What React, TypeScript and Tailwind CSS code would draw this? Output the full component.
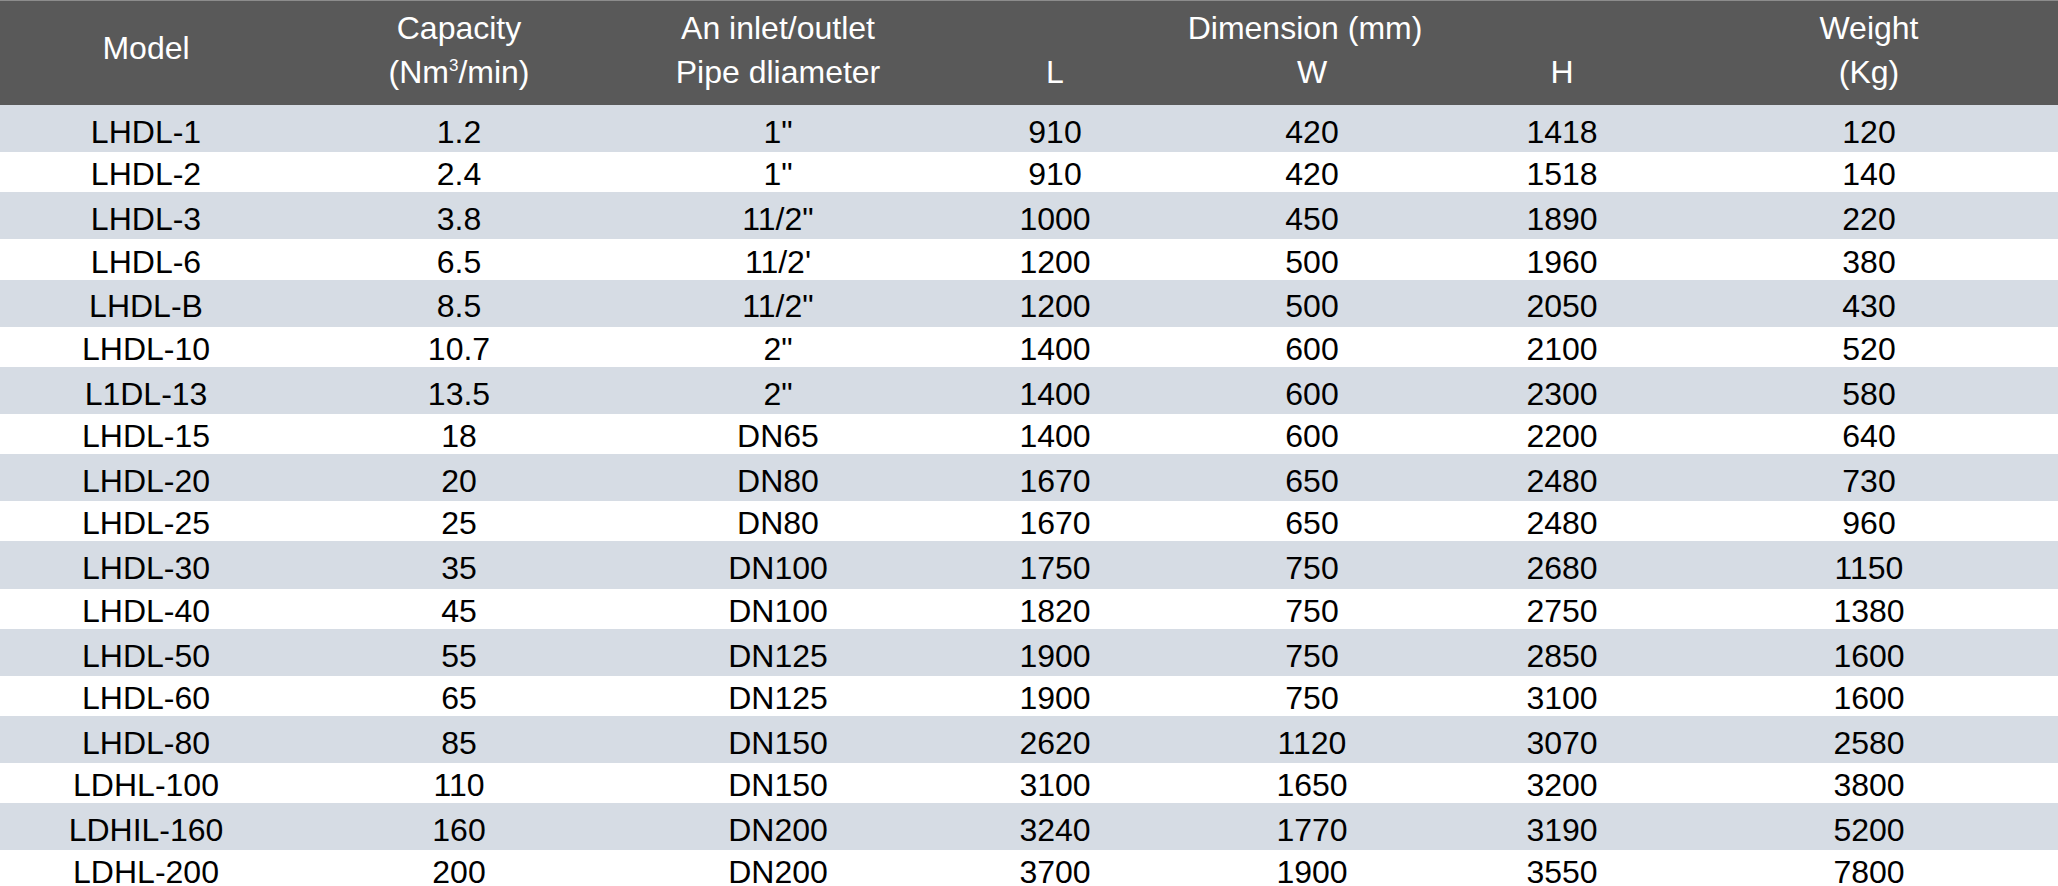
const rows = [
    ["LHDL-1", "1.2", "1\"", "910", "420", "1418", "120"],
    ["LHDL-2", "2.4", "1\"", "910", "420", "1518", "140"],
    ["LHDL-3", "3.8", "11/2\"", "1000", "450", "1890", "220"],
    ["LHDL-6", "6.5", "11/2'", "1200", "500", "1960", "380"],
    ["LHDL-B", "8.5", "11/2\"", "1200", "500", "2050", "430"],
    ["LHDL-10", "10.7", "2\"", "1400", "600", "2100", "520"],
    ["L1DL-13", "13.5", "2\"", "1400", "600", "2300", "580"],
    ["LHDL-15", "18", "DN65", "1400", "600", "2200", "640"],
    ["LHDL-20", "20", "DN80", "1670", "650", "2480", "730"],
    ["LHDL-25", "25", "DN80", "1670", "650", "2480", "960"],
    ["LHDL-30", "35", "DN100", "1750", "750", "2680", "1150"],
    ["LHDL-40", "45", "DN100", "1820", "750", "2750", "1380"],
    ["LHDL-50", "55", "DN125", "1900", "750", "2850", "1600"],
    ["LHDL-60", "65", "DN125", "1900", "750", "3100", "1600"],
    ["LHDL-80", "85", "DN150", "2620", "1120", "3070", "2580"],
    ["LDHL-100", "110", "DN150", "3100", "1650", "3200", "3800"],
    ["LDHIL-160", "160", "DN200", "3240", "1770", "3190", "5200"],
    ["LDHL-200", "200", "DN200", "3700", "1900", "3550", "7800"],
];

const cols = "grid grid-cols-[292px_334px_304px_250px_264px_236px_1fr]";

const App = () => {
    return (
        <div className="w-[2058px] h-[886px] overflow-hidden bg-white font-['Liberation_Sans',Arial,sans-serif] text-[32px]">
            {/* Header */}
            <div className={`${cols} grid-rows-[44px_44px] h-[105px] bg-[#595959] border-t border-[#8c8c8c] text-white leading-[44px] text-center pt-[5px]`}>
                <div className="row-span-2 self-center -mt-[4px]">Model</div>
                <div>Capacity</div>
                <div>An inlet/outlet</div>
                <div className="col-span-3">Dimension (mm)</div>
                <div>Weight</div>
                <div>(Nm<span className="relative -top-[12px] text-[17px] leading-none">3</span>/min)</div>
                <div>Pipe dliameter</div>
                <div>L</div>
                <div>W</div>
                <div>H</div>
                <div>(Kg)</div>
            </div>

            {/* Rows */}
            {rows.map((row, i) => (
                <div
                    key={i}
                    className={`${cols} items-center text-center text-black leading-none ${i % 2 === 0 ? "h-[47.2px] bg-[#d6dce4] pt-[6.5px]" : "h-[40.1px] bg-white pt-[4px]"}`}
                >
                    {row.map((cell, j) => (
                        <div key={j}>{cell}</div>
                    ))}
                </div>
            ))}
        </div>
    );
};

export default App;
